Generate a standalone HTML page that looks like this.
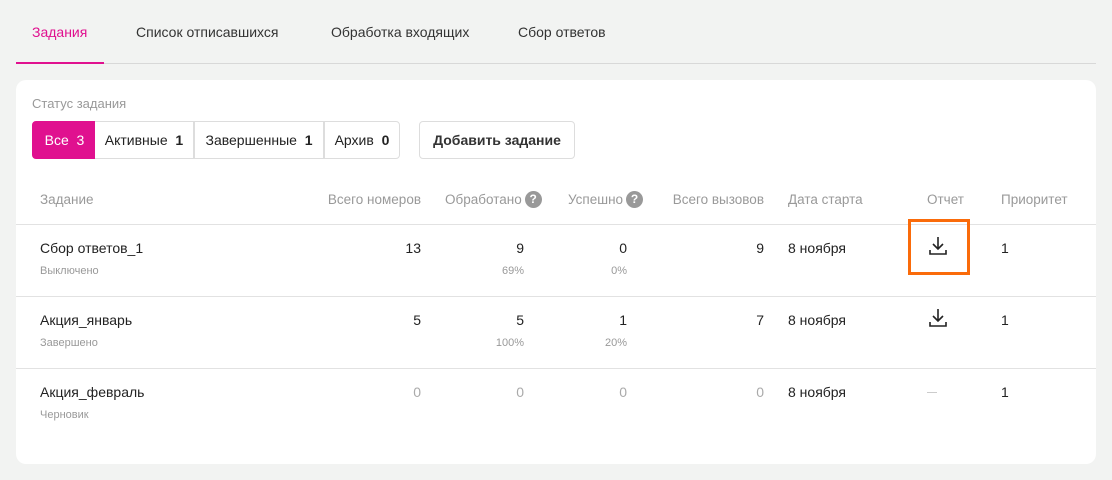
<!DOCTYPE html><html><head><meta charset="utf-8"><style>
body{margin:0;width:1112px;height:480px;background:#f2f3f2;font-family:"Liberation Sans",sans-serif;position:relative;overflow:hidden;color:#222}
.a{position:absolute;white-space:nowrap}
.tab{font-size:14px;top:24px;color:#333}
.h{font-size:13.5px;color:#999;top:192px}
.r{text-align:right}
.n{font-size:14px;color:#222}
.s{font-size:11px;color:#999}
.q{display:inline-block;width:17px;height:17px;border-radius:50%;background:#999;color:#fff;font-size:12px;font-weight:bold;text-align:center;line-height:17px;vertical-align:-1px;margin-left:3px;position:relative;top:-2px}
.line{position:absolute;left:16px;width:1080px;height:1px;background:#e2e2e2}
.btn{position:absolute;top:121px;height:36px;border:1px solid #ddd;background:#fff;font-size:14px;line-height:36px;text-align:center;box-sizing:content-box}
</style></head><body>
<div class="a tab" style="left:32px;color:#e0108f">Задания</div>
<div class="a tab" style="left:136px">Список отписавшихся</div>
<div class="a tab" style="left:331px">Обработка входящих</div>
<div class="a tab" style="left:518px">Сбор ответов</div>
<div class="a" style="left:16px;top:63px;width:1080px;height:1px;background:#d8d8d8"></div>
<div class="a" style="left:16px;top:62px;width:88px;height:2px;background:#e0108f"></div>
<div class="a" style="left:16px;top:80px;width:1080px;height:384px;background:#fff;border-radius:10px"></div>
<div class="a" style="left:32px;top:96px;font-size:13px;color:#999">Статус задания</div>
<div class="btn" style="left:32px;width:63px;background:#e0108f;border-color:#e0108f;color:#fff;border-radius:4px 0 0 4px;top:121px">Все&nbsp; 3</div>
<div class="btn" style="left:95px;width:98px;border-left:none">Активные&nbsp; <b>1</b></div>
<div class="btn" style="left:194px;width:128px">Завершенные&nbsp; <b>1</b></div>
<div class="btn" style="left:324px;width:74px;border-radius:0 4px 4px 0">Архив&nbsp; <b>0</b></div>
<div class="btn" style="left:419px;width:154px;border-radius:4px;font-weight:bold;color:#333">Добавить задание</div>

<div class="a h" style="left:40px">Задание</div>
<div class="a h r" style="right:691px">Всего номеров</div>
<div class="a h" style="left:445px">Обработано<span class="q">?</span></div>
<div class="a h" style="left:568px">Успешно<span class="q">?</span></div>
<div class="a h r" style="right:348px">Всего вызовов</div>
<div class="a h" style="left:788px">Дата старта</div>
<div class="a h" style="left:927px">Отчет</div>
<div class="a h" style="left:1001px">Приоритет</div>
<div class="line" style="top:224px"></div>
<div class="line" style="top:296px"></div>
<div class="line" style="top:368px"></div>

<div class="a n" style="left:40px;top:240px">Сбор ответов_1</div>
<div class="a s" style="left:40px;top:265px">Выключено</div>
<div class="a n r" style="right:691px;top:240px">13</div>
<div class="a n r" style="right:588px;top:240px">9</div>
<div class="a s r" style="right:588px;top:265px">69%</div>
<div class="a n r" style="right:485px;top:240px">0</div>
<div class="a s r" style="right:485px;top:265px">0%</div>
<div class="a n r" style="right:348px;top:240px">9</div>
<div class="a n" style="left:788px;top:240px">8 ноября</div>
<div class="a n" style="left:1001px;top:240px">1</div>
<div class="a" style="left:908px;top:219px;width:56px;height:50px;border:3px solid #fa6b0a"></div>
<svg class="a" style="left:927px;top:235px" width="22" height="22" viewBox="0 0 22 22" fill="none" stroke="#222" stroke-width="1.6"><path d="M11 2v12M6 9l5 5 5-5M3 15v4h16v-4"/></svg>

<div class="a n" style="left:40px;top:312px">Акция_январь</div>
<div class="a s" style="left:40px;top:337px">Завершено</div>
<div class="a n r" style="right:691px;top:312px">5</div>
<div class="a n r" style="right:588px;top:312px">5</div>
<div class="a s r" style="right:588px;top:337px">100%</div>
<div class="a n r" style="right:485px;top:312px">1</div>
<div class="a s r" style="right:485px;top:337px">20%</div>
<div class="a n r" style="right:348px;top:312px">7</div>
<div class="a n" style="left:788px;top:312px">8 ноября</div>
<div class="a n" style="left:1001px;top:312px">1</div>
<svg class="a" style="left:927px;top:307px" width="22" height="22" viewBox="0 0 22 22" fill="none" stroke="#222" stroke-width="1.6"><path d="M11 2v12M6 9l5 5 5-5M3 15v4h16v-4"/></svg>

<div class="a n" style="left:40px;top:384px">Акция_февраль</div>
<div class="a s" style="left:40px;top:409px">Черновик</div>
<div class="a n r" style="right:691px;top:384px;color:#aaa">0</div>
<div class="a n r" style="right:588px;top:384px;color:#aaa">0</div>
<div class="a n r" style="right:485px;top:384px;color:#aaa">0</div>
<div class="a n r" style="right:348px;top:384px;color:#aaa">0</div>
<div class="a n" style="left:788px;top:384px">8 ноября</div>
<div class="a" style="left:927px;top:392px;width:10px;height:1px;background:#ccc"></div>
<div class="a n" style="left:1001px;top:384px">1</div>
</body></html>
